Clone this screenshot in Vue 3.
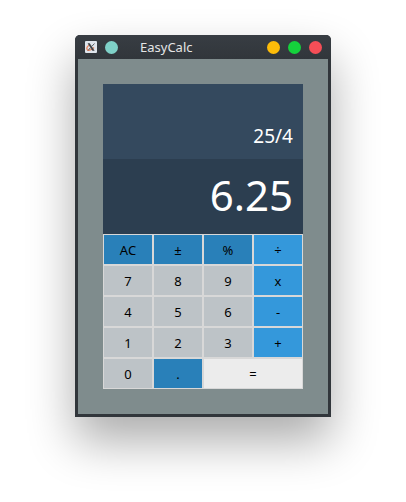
<script setup>
import { ref } from 'vue'

const expression = ref('25/4')
const result = ref('6.25')

const keys = [
  { label: 'AC', kind: 'function' },
  { label: '±', kind: 'function' },
  { label: '%', kind: 'function' },
  { label: '÷', kind: 'operator' },
  { label: '7', kind: 'digit' },
  { label: '8', kind: 'digit' },
  { label: '9', kind: 'digit' },
  { label: 'x', kind: 'operator' },
  { label: '4', kind: 'digit' },
  { label: '5', kind: 'digit' },
  { label: '6', kind: 'digit' },
  { label: '-', kind: 'operator' },
  { label: '1', kind: 'digit' },
  { label: '2', kind: 'digit' },
  { label: '3', kind: 'digit' },
  { label: '+', kind: 'operator' },
  { label: '0', kind: 'digit' },
  { label: '.', kind: 'function' },
  { label: '=', kind: 'equals' }
]
</script>

<template>
  <main class="desktop">
    <section class="window">
      <header class="titlebar">
        <svg class="app-icon" viewBox="0 0 12 12" aria-hidden="true">
          <rect width="12" height="12" rx="1" fill="#dfe5ec" />
          <path d="M5 4C2 5 1 7.500 2.500 9C4 10 7 8.500 9 6.500" fill="none" stroke="#e9825a" stroke-width="1.3" />
          <path d="M3 2.500h1.600l4.600 7H7.500z" fill="#3b3e42" stroke="#3b3e42" stroke-width="0.500" />
          <path d="M9.500 2.500L6.800 5.400M5.200 7L3 9.500" stroke="#4a4d50" stroke-width="0.900" />
        </svg>
        <button class="dot teal" type="button" aria-label="Pin"></button>
        <h1 class="title">EasyCalc</h1>
        <div class="controls">
          <button class="dot amber" type="button" aria-label="Minimize"></button>
          <button class="dot green" type="button" aria-label="Maximize"></button>
          <button class="dot red" type="button" aria-label="Close"></button>
        </div>
      </header>
      <div class="body">
        <output class="screen expression">{{ expression }}</output>
        <output class="screen result">{{ result }}</output>
        <div class="keypad">
          <button v-for="key in keys" :key="key.label" type="button" class="key" :class="key.kind">{{ key.label }}</button>
        </div>
      </div>
    </section>
  </main>
</template>

<style>
body {
  margin: 0;
  background: #fff;
}
</style>

<style scoped>
.desktop {
  box-sizing: border-box;
  min-height: 100vh;
  padding: 35px 75px;
  font-family: "Noto Sans", "Open Sans", sans-serif;
  overflow: hidden;
}

.window {
  background: #31363b;
  border-radius: 5px 5px 0 0;
  box-shadow: 0 24px 48px rgba(0, 0, 0, 0.33);
}

.window::after {
  content: "";
  display: block;
  height: 3px;
}

.titlebar {
  display: flex;
  align-items: center;
  height: 24px;
  padding: 0 9px 0 10px;
  border-radius: 5px 5px 0 0;
  background: linear-gradient(#383d43, #31363b);
}

.app-icon {
  width: 12px;
  height: 12px;
  margin-right: 8px;
}

.dot {
  width: 13px;
  height: 13px;
  padding: 0;
  border: 0;
  border-radius: 50%;
}

.teal { background: #7fd1c8; }
.amber { background: #fdbc09; }
.green { background: #15d23c; }
.red { background: #f54e57; }

.title {
  margin: 0 0 0 22px;
  font-size: 13px;
  font-weight: 400;
  line-height: 24px;
  color: #e4e5e6;
}

.controls {
  display: flex;
  gap: 8px;
  margin-left: auto;
}

.body {
  margin: 0 3px;
  padding: 25px;
  background: #7f8c8d;
}

.screen {
  display: flex;
  align-items: flex-end;
  justify-content: flex-end;
  box-sizing: border-box;
  height: 75px;
  padding: 0 10px 10px;
  color: #fff;
}

.expression {
  background: #34495e;
  font-size: 19px;
  line-height: 26px;
}

.result {
  background: #2c3e50;
  font-size: 42px;
  line-height: 58px;
}

.keypad {
  display: grid;
  grid-template-columns: repeat(4, 1fr);
  grid-auto-rows: 31px;
}

.key {
  padding: 0;
  border: 1px solid #d8d8d8;
  font-family: inherit;
  font-size: 13px;
  line-height: 18px;
  color: #000;
}

.digit { background: #bdc3c7; }
.function { background: #2980b9; }
.operator { background: #3498db; }

.equals {
  grid-column: span 2;
  background: #ececec;
}
</style>
